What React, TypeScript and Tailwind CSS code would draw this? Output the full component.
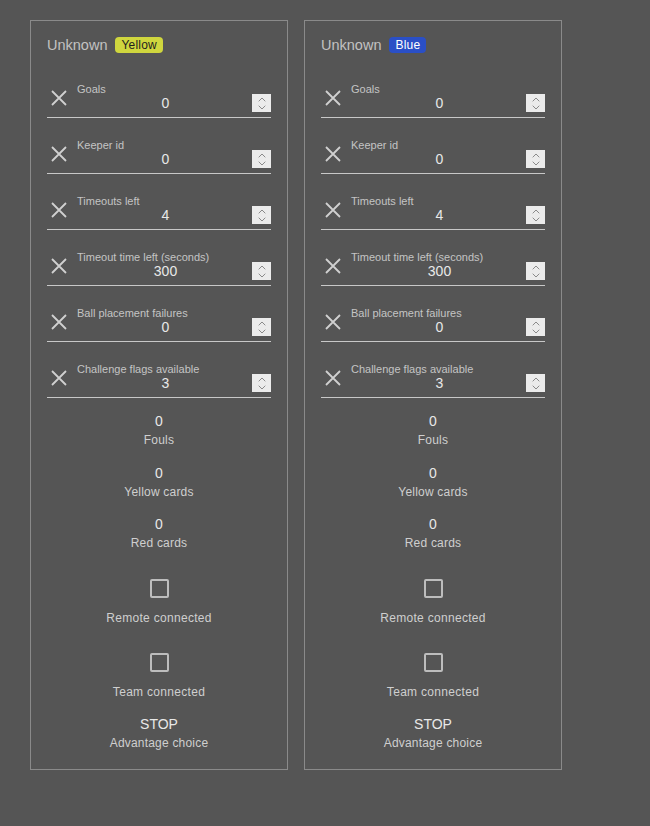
import React from 'react';

const fields = [
  { label: 'Goals', value: '0' },
  { label: 'Keeper id', value: '0' },
  { label: 'Timeouts left', value: '4' },
  { label: 'Timeout time left (seconds)', value: '300' },
  { label: 'Ball placement failures', value: '0' },
  { label: 'Challenge flags available', value: '3' },
];

const stats = [
  { label: 'Fouls', value: '0' },
  { label: 'Yellow cards', value: '0' },
  { label: 'Red cards', value: '0' },
];

function CloseIcon() {
  return (
    <svg width="16" height="16" viewBox="0 0 16 16" className="shrink-0">
      <path d="M1 1L15 15M15 1L1 15" stroke="#d0d0d0" strokeWidth="1.8" fill="none" />
    </svg>
  );
}

function Spinner() {
  return (
    <div className="w-[19px] h-[18px] bg-[#ebebeb] flex flex-col items-center justify-center gap-[3px]">
      <svg width="8" height="5" viewBox="0 0 8 5">
        <path d="M0.7 4.3L4 1L7.3 4.3" stroke="#8a8a8a" strokeWidth="1" fill="none" />
      </svg>
      <svg width="8" height="5" viewBox="0 0 8 5">
        <path d="M0.7 0.7L4 4L7.3 0.7" stroke="#8a8a8a" strokeWidth="1" fill="none" />
      </svg>
    </div>
  );
}

function Field({ label, value }: { label: string; value: string }) {
  return (
    <div className="flex border-b border-[#c8c8c8]">
      <div className="w-[30px] pl-1 pt-[6px]">
        <CloseIcon />
      </div>
      <div className="flex-1 flex flex-col">
        <div className="text-[11px] leading-[10px] h-[10px] text-[#c4c4c4] whitespace-nowrap">{label}</div>
        <div className="flex items-start h-[23px]">
          <div className="flex-1 text-center text-[14px] leading-[16px] pt-[1px] pl-[2px] text-[#e8e8e8]">{value}</div>
          <Spinner />
        </div>
      </div>
    </div>
  );
}

function Checkbox() {
  return <div className="w-[19px] h-[19px] border-2 border-[#bdbdbd] rounded-[2px]" />;
}

function TeamPanel({ color }: { color: 'yellow' | 'blue' }) {
  return (
    <div className="w-[258px] border border-[#8a8a8a] px-4 pt-4 pb-[19px] flex flex-col">
      <div className="flex items-center h-4 gap-2">
        <span className="text-[14.5px] leading-4 text-[#c2c2c2]">Unknown</span>
        {color === 'yellow' ? (
          <span className="px-[6px] h-4 leading-4 rounded-[4px] text-[12px] tracking-[0.2px] bg-[#cfd63e] text-[#1e1e1e]">Yellow</span>
        ) : (
          <span className="px-[6px] h-4 leading-4 rounded-[4px] text-[12px] tracking-[0.2px] bg-[#2a4fc6] text-white">Blue</span>
        )}
      </div>
      <div className="flex flex-col gap-[22px] mt-[31px]">
        {fields.map((f) => (
          <Field key={f.label} label={f.label} value={f.value} />
        ))}
      </div>
      <div className="flex flex-col items-center mt-[15px] gap-[17.5px]">
        {stats.map((s) => (
          <div key={s.label} className="flex flex-col items-center">
            <div className="text-[14px] leading-4 text-[#e8e8e8]">{s.value}</div>
            <div className="text-[12px] leading-[14px] mt-[4px] text-[#cfcfcf] tracking-[0.2px]">{s.label}</div>
          </div>
        ))}
      </div>
      <div className="flex flex-col items-center mt-[29px]">
        <Checkbox />
        <div className="text-[12px] leading-[14px] mt-[13px] text-[#cfcfcf] tracking-[0.3px]">Remote connected</div>
        <div className="mt-[28px]">
          <Checkbox />
        </div>
        <div className="text-[12px] leading-[14px] mt-[13px] text-[#cfcfcf] tracking-[0.3px]">Team connected</div>
        <div className="text-[14px] leading-4 mt-[17px] text-[#e8e8e8]">STOP</div>
        <div className="text-[12px] leading-[14px] mt-[4px] text-[#cfcfcf] tracking-[0.2px]">Advantage choice</div>
      </div>
    </div>
  );
}

export default function App() {
  return (
    <div
      className="min-h-screen bg-[#555555] pl-[30px] pt-5 flex items-start gap-4"
      style={{ fontFamily: '"Liberation Sans", Arial, sans-serif' }}
    >
      <TeamPanel color="yellow" />
      <TeamPanel color="blue" />
    </div>
  );
}
